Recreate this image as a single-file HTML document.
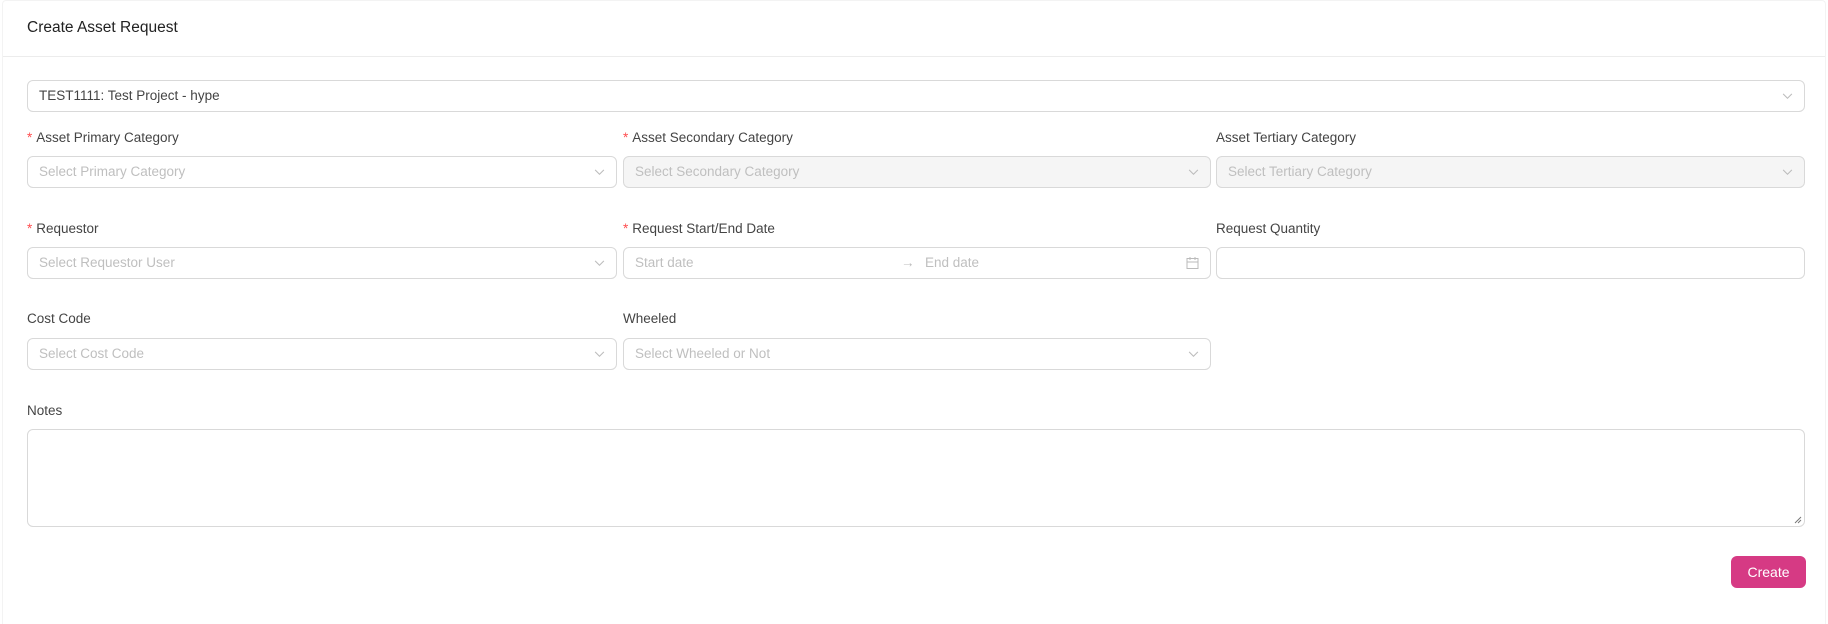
<!DOCTYPE html>
<html style="width:1828px;height:624px;overflow:hidden"><head><style>
*{box-sizing:border-box;margin:0;padding:0}
body{width:1828px;height:624px;background:#fff;font-family:"Liberation Sans",sans-serif;position:relative;overflow:hidden;color:#3a3a3a}
.card{position:absolute;left:2px;top:0;width:1824px;height:624px;border:1px solid #f3f3f3;border-bottom:none;border-radius:4px 4px 0 0}
.hd{position:absolute;left:0;right:0;top:0;height:56px;border-bottom:1px solid #ececec}
.title{position:absolute;left:27px;top:19px;font-size:15.5px;color:#222}
.box{position:absolute;height:32px;border:1px solid #d9d9d9;border-radius:6px;background:#fff;font-size:13.5px;padding:0 11px;line-height:30px;color:#bfbfbf}
.box.dis{background:#f5f5f5}
.box .v{color:#444}
.chev{position:absolute;right:11px;top:12px;width:11px;height:7px}
.lbl{position:absolute;font-size:13.5px;color:#444}
.lbl b{color:#ff4d4f;font-weight:normal;margin-right:4px}
.btn{position:absolute;left:1731px;top:556px;width:75px;height:32px;background:#d63a84;color:#fff;border-radius:6px;font-size:14px;text-align:center;line-height:32px}
</style></head><body>
<div class="card"><div class="hd"></div></div>
<div class="title">Create Asset Request</div>

<div class="box" style="left:27px;top:80px;width:1778px"><span class="v">TEST1111: Test Project - hype</span><svg class="chev" viewBox="0 0 12 8"><path d="M1 1l5 5 5-5" fill="none" stroke="#bbb" stroke-width="1.2"/></svg></div>

<div class="lbl" style="left:27px;top:130px"><b>*</b>Asset Primary Category</div>
<div class="lbl" style="left:623px;top:130px"><b>*</b>Asset Secondary Category</div>
<div class="lbl" style="left:1216px;top:130px">Asset Tertiary Category</div>
<div class="box" style="left:27px;top:156px;width:590px">Select Primary Category<svg class="chev" viewBox="0 0 12 8"><path d="M1 1l5 5 5-5" fill="none" stroke="#bbb" stroke-width="1.2"/></svg></div>
<div class="box dis" style="left:623px;top:156px;width:588px">Select Secondary Category<svg class="chev" viewBox="0 0 12 8"><path d="M1 1l5 5 5-5" fill="none" stroke="#bbb" stroke-width="1.2"/></svg></div>
<div class="box dis" style="left:1216px;top:156px;width:589px">Select Tertiary Category<svg class="chev" viewBox="0 0 12 8"><path d="M1 1l5 5 5-5" fill="none" stroke="#bbb" stroke-width="1.2"/></svg></div>

<div class="lbl" style="left:27px;top:221px"><b>*</b>Requestor</div>
<div class="lbl" style="left:623px;top:221px"><b>*</b>Request Start/End Date</div>
<div class="lbl" style="left:1216px;top:221px">Request Quantity</div>
<div class="box" style="left:27px;top:247px;width:590px">Select Requestor User<svg class="chev" viewBox="0 0 12 8"><path d="M1 1l5 5 5-5" fill="none" stroke="#bbb" stroke-width="1.2"/></svg></div>
<div class="box" style="left:623px;top:247px;width:588px">Start date<span style="position:absolute;left:277px;color:#bbb">&rarr;</span><span style="position:absolute;left:301px">End date</span><svg style="position:absolute;right:11px;top:8px" width="13" height="14" viewBox="0 0 13 14"><rect x="1" y="2.5" width="11" height="10" fill="none" stroke="#bbb"/><path d="M1 6h11M4 1v3M9 1v3" stroke="#bbb"/></svg></div>
<div class="box" style="left:1216px;top:247px;width:589px"></div>

<div class="lbl" style="left:27px;top:311px">Cost Code</div>
<div class="lbl" style="left:623px;top:311px">Wheeled</div>
<div class="box" style="left:27px;top:338px;width:590px">Select Cost Code<svg class="chev" viewBox="0 0 12 8"><path d="M1 1l5 5 5-5" fill="none" stroke="#bbb" stroke-width="1.2"/></svg></div>
<div class="box" style="left:623px;top:338px;width:588px">Select Wheeled or Not<svg class="chev" viewBox="0 0 12 8"><path d="M1 1l5 5 5-5" fill="none" stroke="#bbb" stroke-width="1.2"/></svg></div>

<div class="lbl" style="left:27px;top:403px">Notes</div>
<div class="box" style="left:27px;top:429px;width:1778px;height:98px"><svg style="position:absolute;right:2px;bottom:2px" width="8" height="8" viewBox="0 0 8 8"><path d="M7 1L1 7M7 4L4 7" stroke="#777"/></svg></div>

<div class="btn">Create</div>
</body></html>
